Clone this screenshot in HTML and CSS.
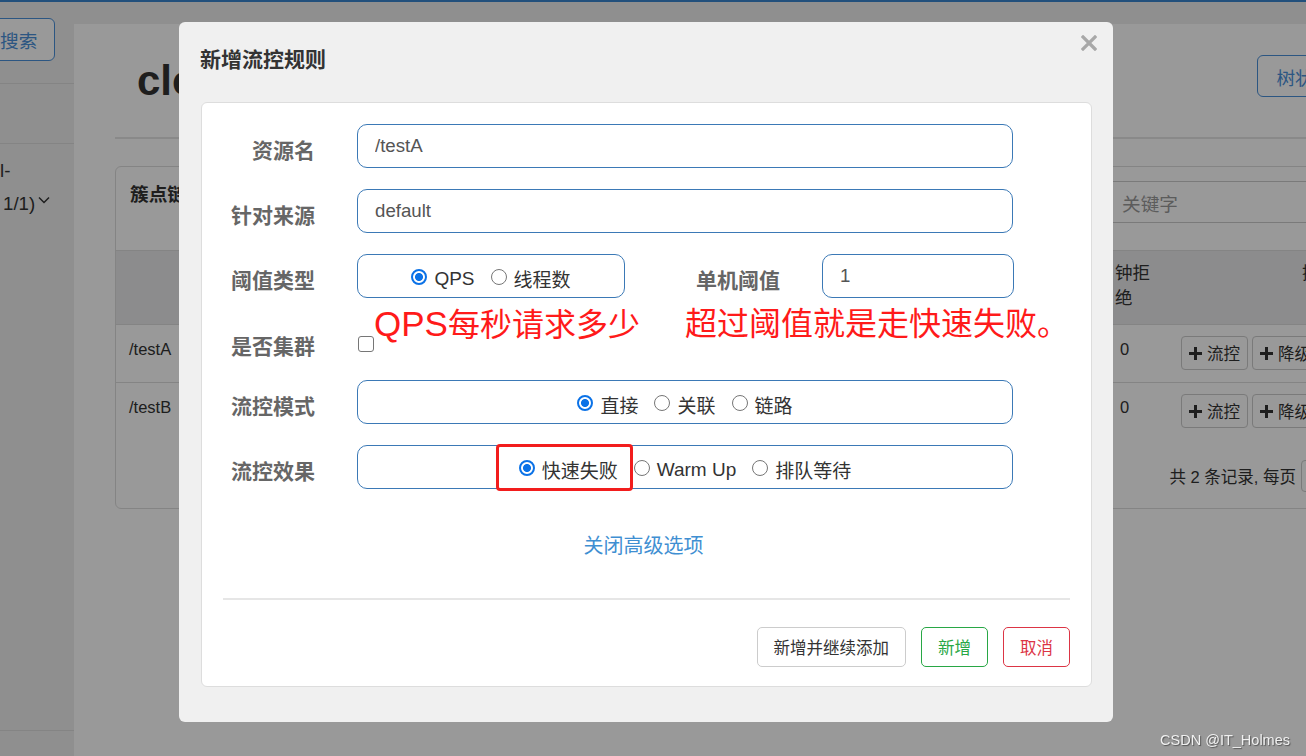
FILE: index.html
```html
<!DOCTYPE html>
<html lang="zh-CN">
<head>
<meta charset="utf-8">
<title>新增流控规则</title>
<link rel="stylesheet" href="styles.css">
</head>
<body>
<div class="page">
  <aside class="sidebar">
    <div class="sb-search"><button class="sb-btn">搜索</button></div>
    <div class="sb-blank"></div>
    <div class="sb-item">
      <div class="sb-line">l-</div>
      <div class="sb-line sb-line2">1/1)<svg class="chev" width="12" height="8" viewBox="0 0 12 8"><polyline points="1,1.5 6,6.5 11,1.5" fill="none" stroke="#333" stroke-width="1.5"/></svg></div>
    </div>
    <div class="sb-foot"></div>
  </aside>
  <main class="main">
    <div class="content">
      <div class="content-head">
        <h1 class="app-title">cloudalibaba</h1>
        <button class="tree-btn">树状视图</button>
      </div>
      <div class="card">
        <div class="card-head">
          <div class="card-title">簇点链路</div>
          <div class="search">关键字</div>
        </div>
        <div class="thead">
          <div class="c1 th-center">资源名</div>
          <div class="c2">钟拒绝</div>
          <div class="c3 th-op">操作</div>
        </div>
        <div class="tr">
          <div class="c1">/testA</div>
          <div class="c2">0</div>
          <div class="c3">
            <button class="op-btn"><svg width="13" height="13" viewBox="0 0 13 13"><path d="M5 0h3v5h5v3H8v5H5V8H0V5h5z" fill="#333"/></svg>流控</button>
            <button class="op-btn"><svg width="13" height="13" viewBox="0 0 13 13"><path d="M5 0h3v5h5v3H8v5H5V8H0V5h5z" fill="#333"/></svg>降级</button>
          </div>
        </div>
        <div class="tr">
          <div class="c1">/testB</div>
          <div class="c2">0</div>
          <div class="c3">
            <button class="op-btn"><svg width="13" height="13" viewBox="0 0 13 13"><path d="M5 0h3v5h5v3H8v5H5V8H0V5h5z" fill="#333"/></svg>流控</button>
            <button class="op-btn"><svg width="13" height="13" viewBox="0 0 13 13"><path d="M5 0h3v5h5v3H8v5H5V8H0V5h5z" fill="#333"/></svg>降级</button>
          </div>
        </div>
        <div class="pager">
          <span>共 2 条记录, 每页</span>
          <div class="pager-select"></div>
        </div>
      </div>
    </div>
  </main>
</div>

<div class="backdrop"></div>

<div class="modal">
  <div class="modal-header">
    <h4 class="modal-title">新增流控规则</h4>
    <button class="close" aria-label="关闭"><svg width="16" height="16" viewBox="0 0 16 16"><path d="M2 2L14 14M14 2L2 14" stroke="#a8a8a8" stroke-width="3.2" stroke-linecap="square"/></svg></button>
  </div>
  <div class="panel">
    <div class="form-row">
      <label class="lbl">资源名</label>
      <input class="txt" type="text" value="/testA">
    </div>
    <div class="form-row">
      <label class="lbl">针对来源</label>
      <input class="txt" type="text" value="default">
    </div>
    <div class="form-row">
      <label class="lbl">阈值类型</label>
      <div class="radio-box box-grade">
        <label class="opt"><input type="radio" name="grade" checked>QPS</label>
        <label class="opt"><input type="radio" name="grade">线程数</label>
      </div>
      <label class="lbl lbl-wide">单机阈值</label>
      <input class="txt txt-short" type="text" value="1">
    </div>
    <div class="form-row row-cluster">
      <label class="lbl">是否集群</label>
      <input class="chk" type="checkbox">
    </div>
    <div class="form-row">
      <label class="lbl">流控模式</label>
      <div class="radio-box">
        <label class="opt"><input type="radio" name="strategy" checked>直接</label>
        <label class="opt"><input type="radio" name="strategy">关联</label>
        <label class="opt"><input type="radio" name="strategy">链路</label>
      </div>
    </div>
    <div class="form-row row-last">
      <label class="lbl">流控效果</label>
      <div class="radio-box">
        <label class="opt mark"><input type="radio" name="effect" checked>快速失败</label>
        <label class="opt"><input type="radio" name="effect">Warm Up</label>
        <label class="opt"><input type="radio" name="effect">排队等待</label>
      </div>
    </div>
    <div class="adv"><a class="adv-link">关闭高级选项</a></div>
    <div class="divider"></div>
    <div class="actions">
      <button class="btn btn-default">新增并继续添加</button>
      <button class="btn btn-success">新增</button>
      <button class="btn btn-danger">取消</button>
    </div>
    <div class="note note-qps"><span class="lat">QPS</span>每秒请求多少</div>
    <div class="note note-fail">超过阈值就是走快速失败。</div>
  </div>
</div>

<div class="watermark">CSDN @IT_Holmes</div>
</body>
</html>
```

FILE: styles.css
```css
html, body {
  margin: 0;
  padding: 0;
}
body {
  width: 1306px;
  height: 756px;
  overflow: hidden;
  font-family: "Liberation Sans", "Noto Sans CJK SC", sans-serif;
  color: #333;
  background: #eee;
}
button, input {
  font-family: inherit;
}

/* ---------- background page ---------- */
.page {
  display: flex;
  width: 1400px;
  height: 756px;
  box-sizing: border-box;
  border-top: 2px solid #3a86cf;
  background: #eee;
}
.sidebar {
  width: 74px;
  flex: none;
  display: flex;
  flex-direction: column;
  overflow: hidden;
  background: #eee;
}
.sb-search {
  height: 82px;
  box-sizing: border-box;
  border-bottom: 1px solid #ddd;
  padding-top: 16px;
}
.sb-btn {
  display: flex;
  align-items: center;
  height: 43px;
  margin-left: -18px;
  padding: 0 17px;
  border: 1px solid #4a90d9;
  border-radius: 6px;
  background: #fff;
  color: #4a90d9;
  font-size: 18.67px;
}
.sb-blank {
  height: 60px;
  box-sizing: border-box;
  border-bottom: 1px solid #ddd;
}
.sb-item {
  padding-top: 10px;
  font-size: 18.67px;
  line-height: 33px;
  color: #333;
}
.sb-line2 {
  display: flex;
  align-items: center;
  margin-left: 3px;
}
.chev {
  margin-left: 3px;
  margin-top: -8px;
}
.sb-foot {
  margin-top: auto;
  height: 26px;
  box-sizing: border-box;
  border-top: 1px solid #ddd;
}
.main {
  flex: 1;
  display: flex;
  padding-top: 22px;
}
.content {
  flex: 1;
  background: #fff;
  padding: 0 15px 0 41px;
}
.content-head {
  display: flex;
  align-items: flex-start;
  height: 115px;
  box-sizing: border-box;
  border-bottom: 2px solid #e4e4e4;
}
.app-title {
  margin: 33px 0 0 22px;
  font-size: 42px;
  line-height: 48px;
  font-weight: bold;
  color: #333;
  white-space: nowrap;
}
.tree-btn {
  margin: 31px 15px 0 auto;
  height: 42px;
  padding: 0 18px;
  border: 1px solid #4a90d9;
  border-radius: 6px;
  background: #fff;
  color: #4a90d9;
  font-size: 18.67px;
}
.card {
  margin-top: 27px;
  height: 343px;
  box-sizing: border-box;
  border: 1px solid #ddd;
  border-radius: 6px;
}
.card-head {
  display: flex;
  align-items: flex-start;
  height: 84px;
  box-sizing: border-box;
  border-bottom: 1px solid #ddd;
  padding: 0 15px 0 14px;
}
.card-title {
  margin-top: 15px;
  font-size: 18.67px;
  line-height: 26px;
  font-weight: bold;
  color: #333;
}
.search {
  margin: 14px 0 0 auto;
  width: 261px;
  height: 42px;
  box-sizing: border-box;
  border: 1px solid #ccc;
  border-radius: 4px;
  padding: 0 13px;
  display: flex;
  align-items: center;
  font-size: 18.67px;
  color: #999;
}
.thead {
  display: flex;
  height: 73px;
  background: #e9e9ec;
  font-size: 17.5px;
  line-height: 25px;
}
.c1 {
  width: 992px;
  flex: none;
  box-sizing: border-box;
  padding: 12px 13px;
}
.c2 {
  width: 67px;
  flex: none;
  box-sizing: border-box;
  padding: 12px 10px 0 12px;
}
.c3 {
  flex: 1;
  display: flex;
  align-items: flex-start;
  gap: 4px;
  padding: 11px 6px 0;
}
.thead .c1 { text-align: center; padding-top: 24px; }
.thead .c2 { padding: 10px 10px 0 7px; }
.thead .th-op { padding: 10px 0 0 127px; }
.tr {
  display: flex;
  height: 58px;
  box-sizing: border-box;
  border-top: 1px solid #ddd;
  font-size: 16.5px;
  line-height: 25px;
}
.op-btn {
  display: flex;
  align-items: center;
  gap: 5px;
  height: 34px;
  padding: 0 7px;
  border: 1px solid #ccc;
  border-radius: 4px;
  background: #fff;
  color: #333;
  font-size: 16.5px;
  white-space: nowrap;
}
.pager {
  display: flex;
  align-items: center;
  justify-content: flex-end;
  gap: 5px;
  height: 68px;
  padding: 4px 15px 0 0;
  box-sizing: border-box;
  font-size: 16.5px;
  color: #333;
}
.pager-select {
  width: 68px;
  height: 32px;
  box-sizing: border-box;
  border: 1px solid #ccc;
  border-radius: 4px;
}

/* ---------- overlay ---------- */
.backdrop {
  position: fixed;
  inset: 0;
  background: rgba(0, 0, 0, 0.4);
}

/* ---------- modal ---------- */
.modal {
  position: fixed;
  left: 179px;
  top: 22px;
  width: 934px;
  height: 700px;
  box-sizing: border-box;
  padding: 0 21px 35px 22px;
  display: flex;
  flex-direction: column;
  background: #f0f0f0;
  border-radius: 6px;
}
.modal-header {
  display: flex;
  justify-content: space-between;
  align-items: flex-start;
  height: 80px;
  flex: none;
}
.modal-title {
  margin: 24px 0 0 -1px;
  font-size: 21px;
  line-height: 28px;
  font-weight: bold;
  color: #333;
}
.close {
  margin: 13px -5px 0 0;
  padding: 0;
  border: 0;
  background: none;
  width: 16px;
  height: 16px;
  display: flex;
}
.panel {
  position: relative;
  flex: 1;
  box-sizing: border-box;
  padding: 21px 21px 0;
  background: #fff;
  border: 1px solid #ddd;
  border-radius: 6px;
}
.form-row {
  display: flex;
  align-items: center;
  height: 44px;
  margin-bottom: 21px;
}
.row-cluster {
  height: 46px;
  margin-bottom: 15px;
}
.row-last {
  margin-bottom: 0;
}
.lbl {
  width: 92px;
  flex: none;
  margin-right: 42px;
  padding-top: 5px;
  text-align: right;
  font-size: 21px;
  font-weight: bold;
  color: #666;
}
.lbl-wide {
  width: 155px;
}
.txt {
  width: 656px;
  height: 44px;
  box-sizing: border-box;
  padding: 0 17px;
  border: 1px solid #3b79b6;
  border-radius: 10px;
  background: #fff;
  font-size: 18.67px;
  color: #555;
  outline: none;
}
.txt-short {
  width: 192px;
}
.radio-box {
  width: 656px;
  height: 44px;
  box-sizing: border-box;
  display: flex;
  justify-content: center;
  align-items: center;
  padding-top: 5px;
  border: 1px solid #3b79b6;
  border-radius: 10px;
}
.box-grade {
  width: 268px;
}
.opt {
  position: relative;
  display: inline-flex;
  align-items: center;
  margin: 0 8px;
  font-size: 19px;
  color: #333;
  white-space: nowrap;
}
.opt input {
  appearance: none;
  -webkit-appearance: none;
  flex: none;
  width: 16px;
  height: 16px;
  margin: -3px 7px 0 0;
  box-sizing: border-box;
  border: 1px solid #767676;
  border-radius: 50%;
  background: #fff;
}
.opt input:checked {
  border: 2px solid #0b72e7;
  background: radial-gradient(circle, #0b72e7 0 3.6px, #fff 4.4px);
}
.mark::after {
  content: "";
  position: absolute;
  left: -23px;
  right: -15px;
  top: 50%;
  height: 47px;
  margin-top: -26px;
  box-sizing: border-box;
  border: 3px solid #f21d1d;
  border-radius: 4px;
}
.chk {
  appearance: none;
  -webkit-appearance: none;
  width: 16px;
  height: 16px;
  margin: 4px 0 0 1px;
  box-sizing: border-box;
  border: 1px solid #767676;
  border-radius: 3px;
  background: #fff;
}
.adv {
  margin-top: 43px;
  text-align: center;
  line-height: 28px;
}
.adv-link {
  font-size: 20px;
  color: #3f8fd2;
  cursor: pointer;
  margin-left: -6px;
}
.divider {
  margin-top: 36px;
  border-top: 2px solid #e6e6e6;
}
.actions {
  display: flex;
  justify-content: flex-end;
  gap: 15px;
  margin-top: 27px;
}
.btn {
  height: 40px;
  padding: 0 16px;
  border: 1px solid #ccc;
  border-radius: 5px;
  background: #fff;
  font-size: 16.5px;
  color: #333;
}
.btn-success {
  border-color: #28a745;
  color: #28a745;
}
.btn-danger {
  border-color: #dc3545;
  color: #dc3545;
}
.note {
  position: absolute;
  top: 201px;
  font-size: 32px;
  line-height: 40px;
  color: #ff1a1a;
  white-space: nowrap;
}
.note .lat {
  font-size: 35px;
}
.note-qps {
  left: 172px;
}
.note-fail {
  left: 483px;
}

/* ---------- watermark ---------- */
.watermark {
  position: fixed;
  right: 16px;
  bottom: 8px;
  font-size: 14.5px;
  color: #f0f0f0;
  text-shadow: 1px 1px 1px #555;
}
```
